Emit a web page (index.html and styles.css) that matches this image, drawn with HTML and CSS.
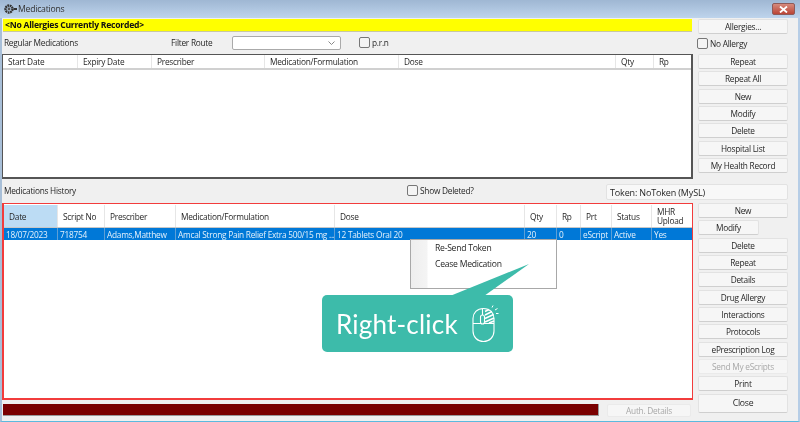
FILE: index.html
```html
<!DOCTYPE html>
<html lang="en">
<head>
  <meta charset="UTF-8" />
  <title>Medications</title>
  <link rel="stylesheet" href="styles.css">
</head>
<body>
  <div class="ventana">
    <div class="titulo">
      <svg class="titulo-icono" width="13" height="12" viewBox="0 0 13 12">
        <circle cx="5" cy="6" r="3.5" fill="none" stroke="#333" stroke-width="2.4" stroke-dasharray="1.8 .6" />
        <circle cx="5" cy="6" r="1.4" fill="#555" />
        <rect x="9.5" y="5" width="3.5" height="2" fill="#333" />
      </svg>
      <span>Medications</span>
      <div class="cerrar">
        <svg width="9" height="7" viewBox="0 0 9 7"><path d="M1 .5 8 6.5M8 .5 1 6.5" stroke="#fff" stroke-width="1.8" /></svg>
      </div>
    </div>

    <div class="cuerpo">
      <div class="izquierda">
        <div class="alerta">&lt;No Allergies Currently Recorded&gt;</div>

        <div class="fila-filtro">
          <span class="etiqueta-regular">Regular Medications</span>
          <span class="etiqueta-filtro">Filter Route</span>
          <div class="combo">
            <svg width="7" height="4" viewBox="0 0 7 4"><path d="M.5 .5 3.5 3.5 6.5 .5" fill="none" stroke="#888" /></svg>
          </div>
          <label class="check"><span class="caja"></span>p.r.n</label>
        </div>

        <div class="tabla tabla-regular">
          <div class="cabecera">
            <div>Start Date</div>
            <div>Expiry Date</div>
            <div>Prescriber</div>
            <div>Medication/Formulation</div>
            <div>Dose</div>
            <div>Qty</div>
            <div>Rp</div>
          </div>
        </div>

        <div class="fila-historial">
          <span>Medications History</span>
          <label class="check"><span class="caja"></span>Show Deleted?</label>
        </div>

        <div class="marco-rojo">
          <div class="cabecera">
            <div class="activa">Date</div>
            <div>Script No</div>
            <div>Prescriber</div>
            <div>Medication/Formulation</div>
            <div>Dose</div>
            <div>Qty</div>
            <div>Rp</div>
            <div>Prt</div>
            <div>Status</div>
            <div>MHR Upload</div>
          </div>
          <div class="renglon">
            <div>18/07/2023</div>
            <div>718754</div>
            <div>Adams,Matthew</div>
            <div>Amcal Strong Pain Relief Extra 500/15 mg ...</div>
            <div>12 Tablets Oral 20</div>
            <div>20</div>
            <div>0</div>
            <div>eScript</div>
            <div>Active</div>
            <div>Yes</div>
          </div>
        </div>

        <div class="fila-final">
          <div class="barra-roja"></div>
          <button class="btn btn-auth" disabled>Auth. Details</button>
        </div>
      </div>

      <div class="derecha">
        <button class="btn btn-alergia">Allergies...</button>
        <label class="check check-alergia"><span class="caja"></span>No Allergy</label>
        <div class="grupo">
          <button class="btn">Repeat</button>
          <button class="btn">Repeat All</button>
          <button class="btn">New</button>
          <button class="btn">Modify</button>
          <button class="btn">Delete</button>
          <button class="btn">Hospital List</button>
          <button class="btn">My Health Record</button>
        </div>
        <div class="token">Token: NoToken (MySL)</div>
        <div class="grupo">
          <button class="btn">New</button>
          <button class="btn btn-corto">Modify</button>
          <button class="btn">Delete</button>
          <button class="btn">Repeat</button>
          <button class="btn">Details</button>
          <button class="btn">Drug Allergy</button>
          <button class="btn">Interactions</button>
          <button class="btn">Protocols</button>
          <button class="btn">ePrescription Log</button>
          <button class="btn" disabled>Send My eScripts</button>
          <button class="btn">Print</button>
          <button class="btn btn-cerrar">Close</button>
        </div>
      </div>
    </div>

    <div class="menu">
      <div>Re-Send Token</div>
      <div>Cease Medication</div>
    </div>

    <div class="globo">
      <svg class="globo-pico" width="82" height="34" viewBox="0 0 82 34"><path d="M0 33 79 1 34 33Z" fill="#3dbbaa" /></svg>
      <span>Right-click</span>
      <svg class="raton" width="28" height="38" viewBox="0 0 28 38" fill="none" stroke="#fff" stroke-width="1.1">
        <path d="M12.5 3.5C6 3.5 2 8 2 13.5V26C2 32 6.5 36.5 12.5 36.5S23 32 23 26V13.5C23 8 19 3.5 12.5 3.5Z" />
        <path d="M2 18.5H23M11.5 3.5V12" />
        <rect x="9.5" y="10" width="4" height="9" rx="2" fill="#3dbbaa" />
        <path d="M14 6.5 18 4.5M14 10 21 6.5M14 13.5 22.5 9.5M14 17 23 13M18 18 23 16" stroke-width="1.5" />
        <path d="M21 2.5 22 .5M24 5 26.5 3.5M25 8.5H27.5" stroke-width="1" />
      </svg>
    </div>
  </div>
</body>
</html>
```

FILE: styles.css
```css
html, body { margin: 0; padding: 0; }
body { width: 800px; height: 422px; overflow: hidden; background: #fff; font-family: "Open Sans", "Liberation Sans", sans-serif; font-size: 8.3px; letter-spacing: -0.25px; color: #262626; }

.ventana { position: relative; width: 800px; height: 422px; box-sizing: border-box; background: #f0f0f0; border-left: 2px solid #a8bfd8; border-right: 2px solid #b6cde6; border-bottom: 1px solid #5cb9de; filter: blur(0.3px); }

.titulo { height: 18px; margin-left: -2px; margin-right: -2px; padding-left: 4px; display: flex; align-items: center; gap: 1px; background: linear-gradient(#9fb7d3, #bed4ec); font-size: 8.7px; color: #333; }
.titulo-icono { flex: none; }
.cerrar { margin-left: auto; margin-right: 5px; width: 23px; height: 12px; display: flex; align-items: center; justify-content: center; background: linear-gradient(#d68a7c, #bb4536); border: 1px solid #8f5a58; border-radius: 2px; box-sizing: border-box; }

.cuerpo { display: flex; }
.izquierda { width: 691px; flex: none; }
.derecha { width: 90px; flex: none; margin-left: 5px; padding-top: 1px; }

.alerta { margin: 1px 0 0 1px; width: 687px; height: 12px; line-height: 12px; background: #ffff00; border-bottom: 1px solid #c8c8a0; font-weight: 700; font-size: 8.6px; color: #111; padding-left: 2px; }

.fila-filtro { height: 22px; padding-bottom: 1px; box-sizing: border-box; display: flex; align-items: center; padding-left: 2px; }
.etiqueta-regular { width: 167px; }
.etiqueta-filtro { width: 61px; }
.combo { width: 109px; height: 14px; box-sizing: border-box; border: 1px solid #aaa; border-radius: 2px; background: #fff; display: flex; align-items: center; justify-content: flex-end; padding-right: 5px; margin-right: 18px; }
.check { display: flex; align-items: center; gap: 2px; }
.caja { width: 9px; height: 9px; border: 1px solid #777; border-radius: 2px; background: #f4f4f4; flex: none; }

.tabla-regular { height: 125px; box-sizing: border-box; background: #fff; border: 1px solid #555; border-width: 1px 2px 2px 1px; }
.cabecera { display: grid; }
.cabecera > div { border-right: 1px solid #e6e6e6; box-sizing: border-box; display: flex; align-items: center; padding-left: 5px; }
.tabla-regular .cabecera { grid-template-columns: 75px 74px 113px 134px 217px 38px 36px; height: 15px; border-bottom: 2px solid #d0d0d0; box-sizing: border-box; }
.tabla-regular .cabecera > div:last-child { border-right: none; }

.fila-historial { height: 24px; display: flex; align-items: center; padding-left: 2px; padding-bottom: 2px; box-sizing: border-box; }
.fila-historial > span { width: 403px; }

.marco-rojo { height: 197px; box-sizing: border-box; background: #fff; border: 2px solid #f23c3c; border-width: 1.5px 1.5px 2px 2px; }
.marco-rojo .cabecera, .renglon { display: grid; grid-template-columns: 54px 47px 71px 159px 190px 32px 24px 31px 40px 1fr; }
.marco-rojo .cabecera { height: 23px; margin-top: 1px; border-bottom: 1px solid #c8c8c8; box-sizing: border-box; }
.marco-rojo .cabecera > div:last-child { border-right: none; line-height: 9.5px; }
.activa { background: #bcdcf4; }
.renglon { height: 12px; line-height: 13px; background: #0078d7; color: #e4f1fb; }
.renglon > div { border-right: 1px solid #5d9fd6; box-sizing: border-box; padding-left: 2px; white-space: nowrap; overflow: hidden; }
.renglon > div:last-child { border-right: none; }

.fila-final { display: flex; margin-top: 4px; padding-left: 1px; }
.barra-roja { width: 595px; height: 11px; background: #7a0000; border-bottom: 1px solid #999; border-right: 1px solid #999; }

.btn { display: block; width: 90px; height: 15px; margin: 0; padding: 0; box-sizing: border-box; background: #f6f6f6; border: 1px solid #e2e2e2; border-bottom-color: #cfcfcf; border-radius: 2px; font-family: inherit; font-size: 8.3px; letter-spacing: inherit; color: #262626; }
.btn:disabled { color: #a8a8a8; background: #f6f6f6; border-color: #eaeaea; }
.btn-auth { width: 84px; height: 13px; margin-left: 8px; }
.btn-alergia { height: 15px; }
.check-alergia { height: 18px; margin-bottom: 2px; margin-left: -1px; }
.grupo { display: flex; flex-direction: column; gap: 2.33px; }
.token { width: 182px; height: 16px; line-height: 16px; box-sizing: border-box; margin: 11px 0 3px -92px; padding-left: 3px; background: #f8f8f8; border: 1px solid #e2e2e2; border-radius: 2px; font-size: 9px; letter-spacing: -0.15px; }
.btn-corto { width: 61px; }
.btn-cerrar { height: 19px; font-size: 8.7px; }

.menu { position: absolute; left: 408px; top: 239px; width: 147px; height: 50px; box-sizing: border-box; padding-left: 24px; background: linear-gradient(90deg, #eee 0, #f4f4f4 16px, #fff 17px); border: 1px solid #a8a8a8; font-size: 8.6px; }
.menu > div { height: 16px; line-height: 16px; }

.globo { position: absolute; left: 320px; top: 295px; width: 191px; height: 57px; box-sizing: border-box; padding-left: 14px; display: flex; align-items: center; background: #3dbbaa; border-radius: 5px; color: #fff; font-family: Lato, sans-serif; font-size: 26px; letter-spacing: 0.2px; }
.globo-pico { position: absolute; left: 128px; top: -32px; }
.raton { position: absolute; left: 149px; top: 10px; }
```
